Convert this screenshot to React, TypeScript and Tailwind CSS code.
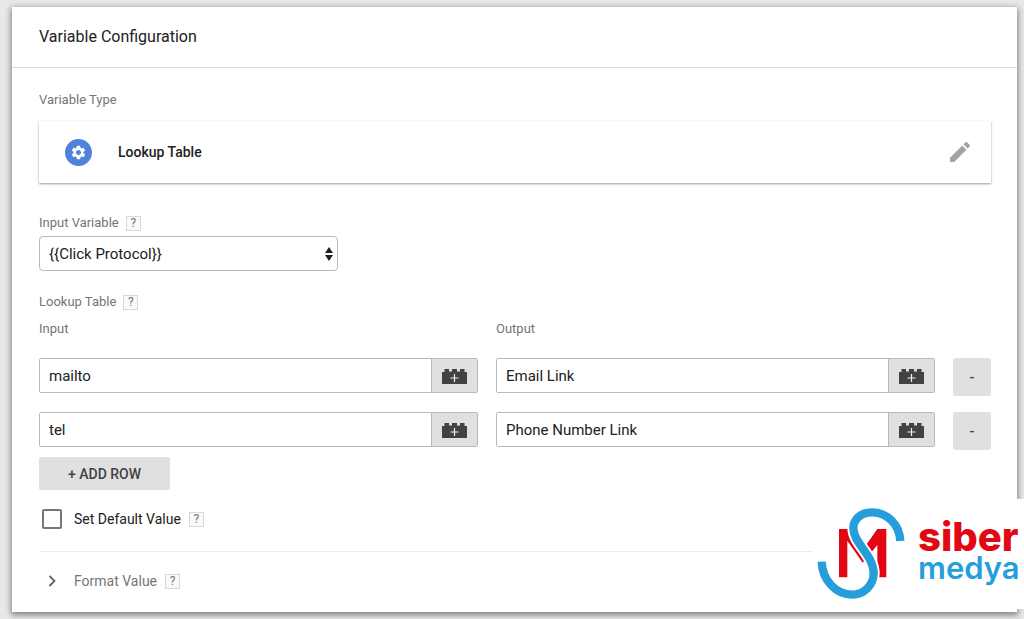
import { useState } from "react";

const initialRows = [
  { input: "mailto", output: "Email Link" },
  { input: "tel", output: "Phone Number Link" },
];

function Help({ topic }: { topic: string }) {
  return (
    <button
      type="button"
      aria-label={`Help: ${topic}`}
      className="flex size-[15px] items-center justify-center border border-[#d8d8d8] bg-[#fafafa] text-xs leading-none text-[#757575]"
    >
      ?
    </button>
  );
}

function GearIcon() {
  return (
    <svg viewBox="0 0 24 24" className="size-[17px]" fill="#fff" aria-hidden="true">
      <path d="M19.14 12.94c.04-.3.06-.61.06-.94 0-.32-.02-.64-.07-.94l2.03-1.58c.18-.14.23-.41.12-.61l-1.92-3.32c-.12-.22-.37-.29-.59-.22l-2.39.96c-.5-.38-1.03-.7-1.62-.94l-.36-2.54c-.04-.24-.24-.41-.48-.41h-3.84c-.24 0-.43.17-.47.41l-.36 2.54c-.59.24-1.13.57-1.62.94l-2.39-.96c-.22-.08-.47 0-.59.22L2.74 8.87c-.12.21-.08.47.12.61l2.03 1.58c-.05.3-.09.63-.09.94s.02.64.07.94l-2.03 1.58c-.18.14-.23.41-.12.61l1.92 3.32c.12.22.37.29.59.22l2.39-.96c.5.38 1.03.7 1.62.94l.36 2.54c.05.24.24.41.48.41h3.84c.24 0 .44-.17.47-.41l.36-2.54c.59-.24 1.13-.56 1.62-.94l2.39.96c.22.08.47 0 .59-.22l1.92-3.32c.12-.22.07-.47-.12-.61l-2.01-1.58zM12 15.6c-1.98 0-3.6-1.62-3.6-3.6s1.62-3.6 3.6-3.6 3.6 1.62 3.6 3.6-1.62 3.6-3.6 3.6z" />
    </svg>
  );
}

function PencilIcon() {
  return (
    <svg viewBox="3 3 18 18" className="size-5" fill="#a3a3a3" aria-hidden="true">
      <path d="M3 17.25V21h3.75L17.81 9.94l-3.75-3.75L3 17.25zM20.71 7.04c.39-.39.39-1.02 0-1.41l-2.34-2.34c-.39-.39-1.02-.39-1.41 0l-1.83 1.83 3.75 3.75 1.83-1.83z" />
    </svg>
  );
}

function BrickIcon() {
  return (
    <svg viewBox="0 0 25 16" className="h-4 w-[25px]" aria-hidden="true">
      <path
        fill="#424242"
        d="M0 4H2.500V1H7V3.500H10V1H15V3.500H18V1H22.500V4H25V16H0z"
      />
      <path d="M12.500 6v8M8.500 10h8" stroke="#f0f0f0" strokeWidth="1.200" />
    </svg>
  );
}

function VariableField({
  label,
  value,
  onChange,
}: {
  label: string;
  value: string;
  onChange: (v: string) => void;
}) {
  return (
    <div className="flex h-[35px] rounded-xs border border-[#b9b9b9]">
      <input
        aria-label={label}
        value={value}
        onChange={(e) => onChange(e.target.value)}
        className="min-w-0 flex-1 bg-white px-[9px] pt-0.5 text-[15px] text-[#212121] outline-none"
      />
      <button
        type="button"
        aria-label={`Choose variable for ${label}`}
        className="flex w-[46px] items-center justify-center border-l border-[#b9b9b9] bg-[#e0e0e0]"
      >
        <BrickIcon />
      </button>
    </div>
  );
}

function Logo() {
  return (
    <div className="absolute right-0 bottom-2.5 flex h-[110px] w-[211px] items-center bg-white pb-0.5 pl-1">
      <svg viewBox="39 51 264 279" className="h-[93px] w-[88px] shrink-0" fill="none" aria-hidden="true">
        <path
          fill="#e30613"
          d="M105 262V117H132L176 180L220 117H247V262H220V165L176 218L130 152V262Z"
        />
        <path
          stroke="#fff"
          strokeWidth="36"
          d="M205 67C165 67 148 92 148 115C148 160 209 195 209 250C209 285 180 314 145 314"
        />
        <path
          stroke="#259fdc"
          strokeWidth="25"
          d="M289 153C287 105 250 67 205 67C165 67 148 92 148 115C148 160 209 195 209 250C209 285 180 314 145 314C95 314 55 270 53 215"
        />
      </svg>
      <div className="flex flex-col pl-[13px] font-['Inter',sans-serif]">
        <span className="text-[40px] leading-[30px] font-extrabold text-[#e30613]">siber</span>
        <span className="text-[31px] leading-8 font-semibold text-[#259fdc]">medya</span>
      </div>
    </div>
  );
}

export default function App() {
  const [rows, setRows] = useState(initialRows);
  const update = (i: number, key: "input" | "output", v: string) =>
    setRows(rows.map((r, n) => (n === i ? { ...r, [key]: v } : r)));

  return (
    <div className="relative bg-[#e8e8e8] pt-[7px] pr-[7px] pb-[7px] pl-3 font-['Roboto',sans-serif] text-[#757575]">
      <main className="bg-white shadow-[0_2px_6px_1px_rgba(0,0,0,0.45)]">
        <header className="flex h-[61px] items-center border-b border-[#dcdcdc] px-[27px]">
          <h1 className="text-base text-[#212121]">Variable Configuration</h1>
        </header>

        <div className="pt-[22px] pr-[26px] pb-5 pl-[27px]">
          <h2 className="text-[13px] leading-5">Variable Type</h2>
          <section className="mt-[11px] flex h-[62px] items-center bg-white px-[26px] shadow-[0_1px_2px_rgba(0,0,0,0.4)]">
            <span className="flex size-[27px] items-center justify-center rounded-full bg-[#4f82dc]">
              <GearIcon />
            </span>
            <span className="flex-1 pl-[26px] text-sm font-medium text-[#212121]">Lookup Table</span>
            <button type="button" aria-label="Edit variable type" className="-mr-[5px]">
              <PencilIcon />
            </button>
          </section>

          <div className="mt-[30px] flex items-center gap-[7px] text-[13px] leading-5">
            <label htmlFor="input-variable">Input Variable</label>
            <Help topic="Input Variable" />
          </div>
          <div className="relative mt-[3px] w-[299px]">
            <select
              id="input-variable"
              className="h-[35px] w-full appearance-none rounded border border-[#b9b9b9] bg-white px-[9px] pt-0.5 text-[15px] text-[#212121]"
            >
              <option>{"{{Click Protocol}}"}</option>
            </select>
            <svg
              viewBox="0 0 8 14"
              className="pointer-events-none absolute top-[11px] right-[5px] h-3.5 w-2"
              fill="#212121"
              aria-hidden="true"
            >
              <path d="M4 0L8 6H0zM4 14L0 8H8z" />
            </svg>
          </div>

          <div className="mt-[21px] flex items-center gap-[7px] text-[13px] leading-5">
            <h2>Lookup Table</h2>
            <Help topic="Lookup Table" />
          </div>

          <table className="mt-[7px] w-full table-fixed">
            <thead>
              <tr className="h-[39px] text-left align-top text-[13px] leading-5">
                <th className="font-normal">Input</th>
                <th className="font-normal">Output</th>
                <td className="w-[38px]" />
              </tr>
            </thead>
            <tbody>
              {rows.map((row, i) => (
                <tr key={i} className="h-[54px] align-top">
                  <td className="pr-[18px]">
                    <VariableField
                      label={`Input ${i + 1}`}
                      value={row.input}
                      onChange={(v) => update(i, "input", v)}
                    />
                  </td>
                  <td className="pr-[18px]">
                    <VariableField
                      label={`Output ${i + 1}`}
                      value={row.output}
                      onChange={(v) => update(i, "output", v)}
                    />
                  </td>
                  <td>
                    <button
                      type="button"
                      aria-label={`Remove row ${i + 1}`}
                      onClick={() => setRows(rows.filter((_, n) => n !== i))}
                      className="flex size-[38px] items-center justify-center rounded-xs bg-[#e0e0e0] text-sm font-medium text-[#424242]"
                    >
                      -
                    </button>
                  </td>
                </tr>
              ))}
            </tbody>
          </table>

          <button
            type="button"
            onClick={() => setRows([...rows, { input: "", output: "" }])}
            className="-mt-[9px] flex h-[33px] w-[131px] items-center justify-center rounded-xs bg-[#e0e0e0] text-sm font-medium text-[#424242]"
          >
            + ADD ROW
          </button>

          <div className="mt-[19px] flex items-center pl-[3px] leading-5">
            <input
              id="default-value"
              type="checkbox"
              className="size-5 appearance-none rounded-xs border-2 border-[#757575] bg-white checked:bg-[#4f82dc]"
            />
            <label htmlFor="default-value" className="pr-2 pl-3 text-sm leading-5 text-[#212121]">
              Set Default Value
            </label>
            <Help topic="Set Default Value" />
          </div>

          <div className="mt-[22px] flex items-center border-t border-[#ececec] pt-[19px] pb-px">
            <button type="button" className="flex items-center pr-2 pl-[9px] text-sm">
              <svg viewBox="0 0 8 12" className="mr-[18px] h-3 w-2" fill="none" aria-hidden="true">
                <path d="M1.500 1L6.500 6L1.500 11" stroke="#616161" strokeWidth="1.800" />
              </svg>
              Format Value
            </button>
            <Help topic="Format Value" />
          </div>
        </div>
      </main>
      <Logo />
    </div>
  );
}
